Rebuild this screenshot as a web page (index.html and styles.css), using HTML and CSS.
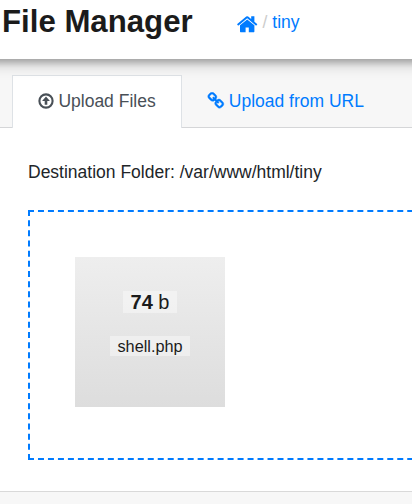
FILE: index.html
```html
<!DOCTYPE html>
<html lang="en">
<head>
<meta charset="utf-8">
<title>File Manager</title>
<link rel="stylesheet" href="styles.css">
</head>
<body>
<nav class="navbar">
  <h1 class="brand">File Manager</h1>
  <a class="home"><svg class="home-icon" viewBox="0 0 1792 1792"><path d="M1472 992v480q0 26-19 45t-45 19h-384v-384h-256v384h-384q-26 0-45-19t-19-45v-480q0-1 .5-3t.5-3l575-474 575 474q1 2 1 6zm223-69l-62 74q-8 9-21 11h-3q-13 0-21-7l-692-577-692 577q-12 8-24 7-13-2-21-11l-62-74q-8-10-7-23.5t11-21.5l719-599q32-26 76-26t76 26l244 204v-195q0-14 9-23t23-9h192q14 0 23 9t9 23v408l219 182q10 8 11 21.5t-7 23.5z"/></svg></a>
  <span class="slash">/</span>
  <a class="crumb">tiny</a>
</nav>
<main class="card">
  <header class="card-header">
    <a class="tab active"><svg class="tab-icon up" viewBox="0 0 16 16"><circle cx="8" cy="8" r="6.6" fill="none" stroke="currentColor" stroke-width="2.1"/><path d="M8 3.6L11.9 8H9.3V11.8H6.7V8H4.1Z"/></svg><span>Upload Files</span></a>
    <a class="tab"><svg class="tab-icon link" viewBox="0 0 1792 1792"><path d="M1520 1216q0-40-28-68l-208-208q-28-28-68-28-42 0-72 32 3 3 19 18.5t21.5 21.5 15 19 13 25.5 3.5 27.5q0 40-28 68t-68 28q-15 0-27.5-3.5t-25.5-13-19-15-21.5-21.5-18.5-19q-33 31-33 73 0 40 28 68l206 207q27 27 68 27 40 0 68-26l147-146q28-28 28-67zm-703-705q0-40-28-68l-206-207q-28-28-68-28-39 0-68 27l-147 146q-28 28-28 67 0 40 28 68l208 208q27 27 68 27 42 0 72-31-3-3-19-18.5t-21.5-21.5-15-19-13-25.5-3.5-27.5q0-40 28-68t68-28q15 0 27.5 3.5t25.5 13 19 15 21.5 21.5 18.5 19q33-31 33-73zm895 705q0 120-85 203l-147 146q-83 83-203 83-121 0-204-85l-206-207q-83-83-83-203 0-123 88-209l-88-88q-86 88-208 88-120 0-204-84l-208-208q-84-84-84-204t85-203l147-146q83-83 203-83 121 0 204 85l206 207q83 83 83 203 0 123-88 209l88 88q86-88 208-88 120 0 204 84l208 208q84 84 84 204z"/></svg><span>Upload from URL</span></a>
  </header>
  <section class="card-body">
    <p class="destination">Destination Folder: /var/www/html/tiny</p>
    <div class="dropzone">
      <div class="preview">
        <div class="size"><span class="chip"><strong>74</strong> b</span></div>
        <div class="filename"><span class="chip">shell.php</span></div>
      </div>
    </div>
  </section>
  <footer class="card-footer"></footer>
</main>
</body>
</html>
```
FILE: styles.css
```css
* { box-sizing: border-box; }

body {
  margin: 0;
  height: 504px;
  overflow: hidden;
  background: #fff;
  color: #212529;
  font: 17.5px/26px "Liberation Sans", Arial, sans-serif;
}

svg { display: block; flex: none; fill: currentColor; }

.navbar {
  position: relative;
  z-index: 1;
  display: flex;
  height: 59px;
  margin: 0 -20px;
  padding-left: 22px;
  background: #fff;
  box-shadow: 0 4px 5px 0 rgba(0, 0, 0, .14), 0 1px 10px 0 rgba(0, 0, 0, .12), 0 5px 15px 0 rgba(0, 0, 0, .2);
}

.brand {
  width: 234px;
  margin: 3px 0 0;
  color: #1b1b1b;
  font-size: 31.2px;
  line-height: 38px;
}

.home, .crumb, .tab { color: #007bff; }
.home { padding-top: 12.8px; }
.home-icon { width: 22.4px; height: 22.4px; }
.slash { margin: 9px 0 0 4px; color: #ccc; }
.crumb { margin: 9px 0 0 5px; }

.card-header {
  display: flex;
  height: 69px;
  padding: 16px 0 0 12px;
  background: #f7f7f7;
  border-bottom: 1px solid #d5d6d8;
}

.tab {
  display: flex;
  height: 53px;
  padding: 12px 25px 0;
  border: 1px solid transparent;
  border-bottom: 0;
  white-space: nowrap;
}

.tab.active {
  width: 170px;
  background: #fff;
  border-color: #dee2e6;
  color: #495057;
}

.up { width: 16px; height: 16px; margin: 4.5px 4.4px 0 0; }
.link {
  width: 17.6px;
  height: 17.6px;
  margin: 3.5px 4.2px 0 -1px;
  stroke: currentColor;
  stroke-width: 40;
}

.card-body { height: 363px; padding: 31px 0 0 28px; overflow: hidden; }
.destination { margin: 0; }

.dropzone {
  width: 1004px;
  height: 250px;
  margin-top: 25px;
  padding: 45px;
  border: 2px dashed #007bff;
}

.preview {
  width: 150px;
  height: 150px;
  padding-top: 32px;
  background: linear-gradient(#eee, #ddd);
  color: #1b1b1b;
  text-align: center;
}

.size { height: 45px; font-size: 20px; }
.filename { font-size: 16.25px; line-height: 24px; }

.chip {
  padding: 0 .4em;
  background: rgba(255, 255, 255, .4);
}

.filename .chip { padding: 1px 7.4px; }

.card-footer {
  height: 13px;
  background: #f7f7f7;
  border-top: 1px solid #d9d9d9;
}
```
